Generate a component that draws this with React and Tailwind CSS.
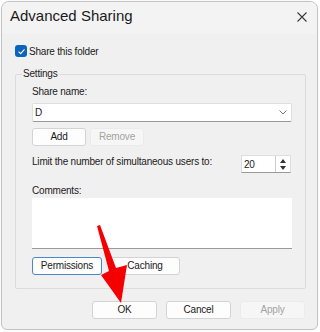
import React from "react";

const btn =
  "flex items-center justify-center h-[18px] rounded-[3px] border text-[10px] leading-none";
const btnOn = btn + " bg-[#fdfdfd] border-[#d3d3d3] text-[#1b1b1b]";
const btnOff = btn + " bg-[#f6f6f6] border-[#ebebeb] text-[#a3a3a3]";

export default function App() {
  return (
    <div
      className="relative w-[320px] h-[332px] bg-white overflow-hidden text-[#1b1b1b] whitespace-nowrap"
      style={{ fontFamily: '"Liberation Sans", Arial, sans-serif' }}
    >
      <div className="ml-[1px] mt-[1px] w-[317px] h-[329px] rounded-t-[8px] rounded-b-[6px] border border-[#c4c4c4] bg-[#f0f0f0] flex flex-col overflow-hidden shadow-[0_0_2px_rgba(0,0,0,0.08)]">
        {/* title bar */}
        <div className="h-[32px] shrink-0 bg-[#f3f3f3] flex items-start justify-between pl-[8px] pr-[8px]">
          <span className="mt-[4px] text-[15px] leading-[20px] text-[#1a1a1a]">
            Advanced Sharing
          </span>
          <svg
            width="12"
            height="12"
            viewBox="0 0 12 12"
            className="mt-[9px] mr-[1px]"
          >
            <path
              d="M1.5 1.5 L10.5 10.5 M10.5 1.5 L1.5 10.5"
              stroke="#3a3a3a"
              strokeWidth="1.1"
              fill="none"
            />
          </svg>
        </div>

        {/* body */}
        <div className="flex flex-col pl-[13px] pr-[11px] tracking-[-0.2px]">
          <label className="mt-[10px] h-[14px] flex items-center gap-[2px] text-[10px]">
            <span className="w-[12px] h-[12px] rounded-[3px] bg-[#0a63bd] flex items-center justify-center">
              <svg width="9" height="9" viewBox="0 0 9 9">
                <path
                  d="M1.6 4.7 L3.6 6.6 L7.5 2.4"
                  stroke="white"
                  strokeWidth="1.1"
                  fill="none"
                />
              </svg>
            </span>
            <span>Share this folder</span>
          </label>

          <fieldset className="mt-[8px] w-[291px] border border-[#dcdcdc] rounded-[2px] pl-[16px] pr-[13px] pb-[13px]">
            <legend className="-ml-[10px] px-[1px] text-[10px] leading-[16px]">
              Settings
            </legend>
            <div className="flex flex-col">
              <div className="mt-[3px] text-[10px] leading-[14px]">Share name:</div>
              <div className="mt-[4px] h-[19px] w-[260px] bg-white border border-[#dedede] border-b-[#9a9a9a] rounded-[2px] flex items-center justify-between pl-[2px] pr-[4px]">
                <span className="text-[10px]">D</span>
                <svg width="8" height="5" viewBox="0 0 8 5">
                  <path
                    d="M0.5 0.5 L4 4 L7.5 0.5"
                    stroke="#6a6a6a"
                    strokeWidth="0.9"
                    fill="none"
                  />
                </svg>
              </div>
              <div className="mt-[6px] flex gap-[4px]">
                <div className={btnOn + " w-[54px]"}>Add</div>
                <div className={btnOff + " w-[54px]"}>Remove</div>
              </div>
              <div className="mt-[9px] flex items-start justify-between">
                <span className="text-[10px] leading-[14px]">
                  Limit the number of simultaneous users to:
                </span>
                <div className="shrink-0 mr-[1px] w-[50px] h-[18px] bg-white border border-[#dedede] border-b-[#9a9a9a] flex items-center justify-between pl-[2px]">
                  <span className="text-[10px]">20</span>
                  <div className="w-[15px] h-[16px] border-l border-[#cfcfcf] flex flex-col items-center justify-center gap-[3px]">
                    <svg width="6" height="4" viewBox="0 0 6 4">
                      <path d="M0 4 L3 0 L6 4 Z" fill="#333" />
                    </svg>
                    <svg width="6" height="4" viewBox="0 0 6 4">
                      <path d="M0 0 L3 4 L6 0 Z" fill="#333" />
                    </svg>
                  </div>
                </div>
              </div>
              <div className="mt-[11px] text-[10px] leading-[14px]">Comments:</div>
              <div className="h-[51px] w-[260px] bg-white border-b border-[#9a9a9a]" />
              <div className="mt-[8px] flex gap-[8px]">
                <div className={btn + " w-[70px] bg-[#fdfdfd] border-[#4a86cc] text-[#1b1b1b]"}>
                  Permissions
                </div>
                <div className={btnOn + " w-[70px]"}>Caching</div>
              </div>
            </div>
          </fieldset>

          <div className="mt-[12px] flex justify-end gap-[9px] pr-[1px]">
            <div className={btnOn + " w-[65px]"}>OK</div>
            <div className={btnOn + " w-[65px]"}>Cancel</div>
            <div className={btnOff + " w-[65px]"}>Apply</div>
          </div>
        </div>
      </div>

      {/* red annotation arrow */}
      <svg
        className="absolute left-0 top-0 pointer-events-none"
        width="320"
        height="332"
        viewBox="0 0 320 332"
      >
        <polygon
          points="97,226 100,225 116,268 127,265 121,303 101,275 109,271"
          fill="#f40000"
        />
      </svg>
    </div>
  );
}
